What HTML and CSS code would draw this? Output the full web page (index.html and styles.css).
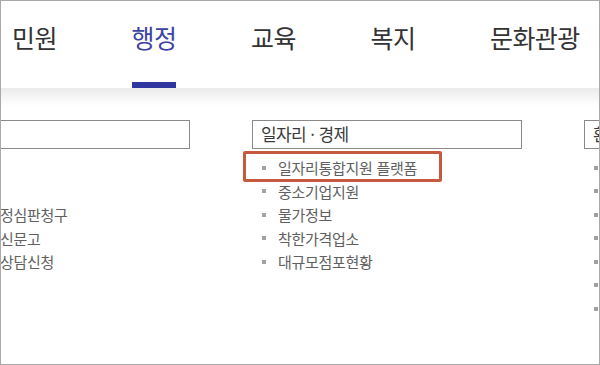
FILE: index.html
```html
<!DOCTYPE html>
<html lang="ko">
<head>
  <meta charset="UTF-8">
  <title>분야별 정보</title>
  <link rel="stylesheet" href="styles.css">
</head>
<body>
  <div class="frame">
    <nav class="tabs">
      <a class="tab">민원</a>
      <a class="tab active">행정</a>
      <a class="tab">교육</a>
      <a class="tab">복지</a>
      <a class="tab">문화관광</a>
    </nav>
    <div class="nav-shadow"></div>

    <div class="columns">
      <section class="col">
        <h2 class="col-title">민원 · 참여</h2>
        <ul class="links">
          <li>정보공개</li>
          <li>민원안내</li>
          <li>온라인행정심판청구</li>
          <li>공직비리신문고</li>
          <li>무료법률상담신청</li>
        </ul>
      </section>

      <section class="col">
        <h2 class="col-title">일자리 · 경제</h2>
        <ul class="links">
          <li>일자리통합지원 플랫폼<span class="highlight"></span></li>
          <li>중소기업지원</li>
          <li>물가정보</li>
          <li>착한가격업소</li>
          <li>대규모점포현황</li>
        </ul>
      </section>

      <section class="col">
        <h2 class="col-title">환경 · 안전</h2>
        <ul class="links">
          <li>대기오염정보</li>
          <li>수질정보</li>
          <li>재난안전</li>
          <li>민방위</li>
          <li>소방안전</li>
          <li>교통정보</li>
          <li>주차정보</li>
        </ul>
      </section>
    </div>
  </div>
</body>
</html>
```

FILE: styles.css
```css
body {
  margin: 0;
  background: #fff;
  font-family: "Noto Sans CJK KR", "Noto Sans", sans-serif;
}
.frame {
  width: 600px;
  height: 365px;
  box-sizing: border-box;
  border: 1px solid #a9a9a9;
  overflow: hidden;
  background: #fff;
}
.tabs {
  display: grid;
  grid-template-columns: repeat(5, 119.5px);
  height: 87px;
  padding-left: 11px;
}
.tab {
  position: relative;
  justify-self: start;
  padding-top: 18px;
  font-size: 25px;
  line-height: 36px;
  letter-spacing: -0.6px;
  color: #333;
  cursor: pointer;
}
.tab.active {
  color: #3c42a3;
}
.tab.active::after {
  content: "";
  position: absolute;
  left: 0;
  right: 0;
  bottom: 0;
  height: 6px;
  background: #3036a0;
}
.nav-shadow {
  height: 18px;
  background: linear-gradient(#ebebeb, #fff);
}
.columns {
  display: grid;
  grid-template-columns: repeat(3, 270px);
  column-gap: 62px;
  margin-left: -81px;
  margin-top: 14px;
}
.col-title {
  margin: 0;
  height: 29px;
  box-sizing: border-box;
  border: 1px solid #8a8a8a;
  padding-left: 8px;
  font-size: 17px;
  font-weight: normal;
  line-height: 26px;
  letter-spacing: -0.6px;
  color: #3a3a3a;
  white-space: nowrap;
  overflow: hidden;
}
.links {
  list-style: none;
  margin: 7px 0 0;
  padding: 0;
}
.links li {
  position: relative;
  display: flex;
  align-items: center;
  gap: 12px;
  padding-left: 10px;
  height: 23.5px;
  font-size: 15px;
  letter-spacing: -0.3px;
  color: #606060;
  white-space: nowrap;
}
.links li::before {
  content: "";
  width: 4px;
  height: 4px;
  background: #a0a0a0;
  flex: none;
}
.highlight {
  position: absolute;
  left: -9px;
  top: -5px;
  width: 199px;
  height: 31px;
  box-sizing: border-box;
  border: 3px solid #c65a3f;
  border-radius: 2px;
}
```
